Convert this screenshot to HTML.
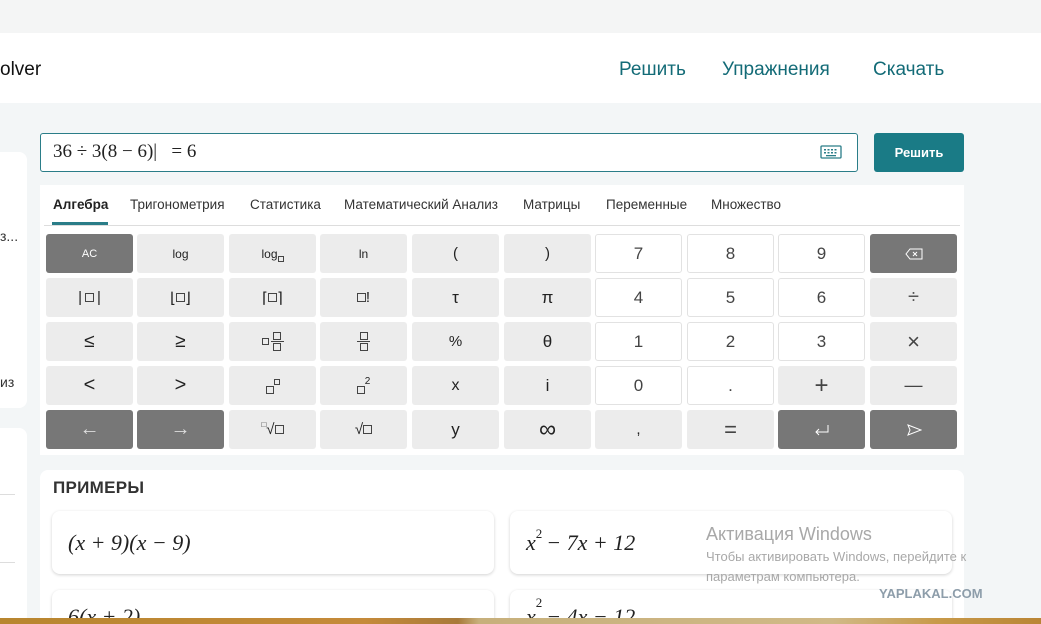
<!DOCTYPE html>
<html style="width:1041px;height:624px;overflow:hidden"><head><meta charset="utf-8"><style>
*{margin:0;padding:0;box-sizing:border-box}
body{width:1041px;height:624px;overflow:hidden;background:#f3f6f7;font-family:"Liberation Sans","DejaVu Sans",sans-serif;position:relative;color:#222}
.a{position:absolute}
.top{left:0;top:0;width:1041px;height:33px;background:#f4f5f5}
.hdr{left:0;top:33px;width:1041px;height:70px;background:#fff}
.nav{top:59px;font-size:19px;color:#136b77}
.card{background:#fff;border-radius:8px}
.k{position:absolute;width:87px;height:39px;border-radius:3px;background:#ececec;display:flex;align-items:center;justify-content:center;font-size:15px;color:#222}
.d{background:#777;color:#fff}
.w{background:#fff;border:1px solid #e2e2e2;font-size:17px;color:#444}
.tab{top:197px;font-size:13.5px;color:#333}
.ex{background:#fff;border-radius:8px;box-shadow:0 1px 3px rgba(0,0,0,.18);font-family:"Liberation Serif",serif;font-style:italic;font-size:22px;padding-left:16px;display:flex;align-items:center;overflow:hidden}
.sq{display:inline-block;width:9px;height:9px;border:1px solid #444}
.sup{font-size:13px;font-style:normal;position:relative;top:-9px;margin-right:4px}
</style></head><body>
<div class="a top"></div>
<div class="a hdr"></div>
<div class="a" style="left:0;top:59px;font-size:19px;color:#111">olver</div>
<div class="a nav" style="left:619px">Решить</div>
<div class="a nav" style="left:722px">Упражнения</div>
<div class="a nav" style="left:873px">Скачать</div>

<div class="a card" style="left:-10px;top:152px;width:37px;height:256px"></div>
<div class="a" style="left:0;top:228px;font-size:14px;color:#333">з...</div>
<div class="a" style="left:0;top:374px;font-size:14px;color:#333">из</div>
<div class="a card" style="left:-10px;top:428px;width:37px;height:196px"></div>
<div class="a" style="left:0;top:494px;width:15px;height:1px;background:#ddd"></div>
<div class="a" style="left:0;top:562px;width:15px;height:1px;background:#ddd"></div>

<div class="a" style="left:40px;top:133px;width:818px;height:39px;background:#fff;border:1px solid #2a7d88;border-radius:3px"></div>
<div class="a" style="left:53px;top:141px;font-family:'Liberation Serif',serif;font-size:19px;color:#222">36 ÷ 3(8 − 6)| &nbsp;&nbsp;= 6</div>
<svg class="a" style="left:820px;top:145px" width="22" height="14" viewBox="0 0 22 14"><rect x="1" y="1" width="20" height="12" rx="1" fill="none" stroke="#2a7d88" stroke-width="1.3"/><g fill="#2a7d88"><rect x="4" y="4" width="2" height="1.5"/><rect x="7.5" y="4" width="2" height="1.5"/><rect x="11" y="4" width="2" height="1.5"/><rect x="14.5" y="4" width="2" height="1.5"/><rect x="4" y="7" width="2" height="1.5"/><rect x="7.5" y="7" width="2" height="1.5"/><rect x="11" y="7" width="2" height="1.5"/><rect x="14.5" y="7" width="2" height="1.5"/><rect x="6" y="10" width="10" height="1.3"/></g></svg>
<div class="a" style="left:874px;top:133px;width:90px;height:39px;background:#1a7b86;border-radius:3px;color:#fff;font-size:13px;font-weight:bold;display:flex;align-items:center;justify-content:center">Решить</div>

<div class="a" style="left:40px;top:185px;width:924px;height:270px;background:#fff"></div>
<div class="a tab" style="left:53px;font-weight:bold;color:#222">Алгебра</div>
<div class="a tab" style="left:130px">Тригонометрия</div>
<div class="a tab" style="left:250px">Статистика</div>
<div class="a tab" style="left:344px">Математический Анализ</div>
<div class="a tab" style="left:523px">Матрицы</div>
<div class="a tab" style="left:606px">Переменные</div>
<div class="a tab" style="left:711px">Множество</div>
<div class="a" style="left:44px;top:225px;width:916px;height:1px;background:#ddd"></div>
<div class="a" style="left:52px;top:222px;width:56px;height:3px;background:#2a7d88"></div>

<div class="k d" style="left:46px;top:234px;font-size:11px">AC</div>
<div class="k" style="left:137px;top:234px;font-size:12px">log</div>
<div class="k" style="left:229px;top:234px;font-size:12px">log<span class="sq" style="width:6px;height:6px;margin-top:10px"></span></div>
<div class="k" style="left:320px;top:234px;font-size:12px">ln</div>
<div class="k" style="left:412px;top:234px">(</div>
<div class="k" style="left:504px;top:234px">)</div>
<div class="k w" style="left:595px;top:234px">7</div>
<div class="k w" style="left:687px;top:234px">8</div>
<div class="k w" style="left:778px;top:234px">9</div>
<div class="k d" style="left:870px;top:234px"><svg width="18" height="12" viewBox="0 0 18 12"><path d="M5 1H17V11H5L1 6Z" fill="none" stroke="#fff"/><path d="M8 4L12 8M12 4L8 8" stroke="#fff"/></svg></div>

<div class="k" style="left:46px;top:278px">|<span class="sq" style="margin:0 3px"></span>|</div>
<div class="k" style="left:137px;top:278px">⌊<span class="sq"></span>⌋</div>
<div class="k" style="left:229px;top:278px">⌈<span class="sq"></span>⌉</div>
<div class="k" style="left:320px;top:278px"><span class="sq"></span>!</div>
<div class="k" style="left:412px;top:278px;font-size:17px">τ</div>
<div class="k" style="left:504px;top:278px;font-size:17px">π</div>
<div class="k w" style="left:595px;top:278px">4</div>
<div class="k w" style="left:687px;top:278px">5</div>
<div class="k w" style="left:778px;top:278px">6</div>
<div class="k" style="left:870px;top:278px;font-size:20px;color:#555">÷</div>

<div class="k" style="left:46px;top:322px;font-size:19px">≤</div>
<div class="k" style="left:137px;top:322px;font-size:19px">≥</div>
<div class="k" style="left:229px;top:322px"><span class="sq" style="width:7px;height:7px"></span><span style="display:inline-flex;flex-direction:column;align-items:center;margin-left:2px"><span class="sq" style="width:8px;height:8px"></span><span style="width:13px;height:1px;background:#444;margin:1px 0"></span><span class="sq" style="width:8px;height:8px"></span></span></div>
<div class="k" style="left:320px;top:322px"><span style="display:inline-flex;flex-direction:column;align-items:center"><span class="sq" style="width:8px;height:8px"></span><span style="width:13px;height:1px;background:#444;margin:1px 0"></span><span class="sq" style="width:8px;height:8px"></span></span></div>
<div class="k" style="left:412px;top:322px">%</div>
<div class="k" style="left:504px;top:322px;font-size:17px">θ</div>
<div class="k w" style="left:595px;top:322px">1</div>
<div class="k w" style="left:687px;top:322px">2</div>
<div class="k w" style="left:778px;top:322px">3</div>
<div class="k" style="left:870px;top:322px;font-size:22px;color:#444">×</div>

<div class="k" style="left:46px;top:366px;font-size:20px">&lt;</div>
<div class="k" style="left:137px;top:366px;font-size:20px">&gt;</div>
<div class="k" style="left:229px;top:366px"><span class="sq" style="width:8px;height:8px;margin-top:8px"></span><span class="sq" style="width:6px;height:6px;margin-top:-8px"></span></div>
<div class="k" style="left:320px;top:366px"><span class="sq" style="width:8px;height:8px;margin-top:8px"></span><span style="font-size:10px;margin-top:-8px">2</span></div>
<div class="k" style="left:412px;top:366px;font-size:16px">x</div>
<div class="k" style="left:504px;top:366px;font-size:17px">i</div>
<div class="k w" style="left:595px;top:366px">0</div>
<div class="k w" style="left:687px;top:366px">.</div>
<div class="k" style="left:778px;top:366px;font-size:24px;color:#444">+</div>
<div class="k" style="left:870px;top:366px;font-size:18px;color:#444">—</div>

<div class="k d" style="left:46px;top:410px;font-size:20px;color:#ddd">←</div>
<div class="k d" style="left:137px;top:410px;font-size:20px;color:#ddd">→</div>
<div class="k" style="left:229px;top:410px"><span style="font-size:8px;margin-top:-10px">□</span>√<span class="sq"></span></div>
<div class="k" style="left:320px;top:410px">√<span class="sq"></span></div>
<div class="k" style="left:412px;top:410px;font-size:17px">y</div>
<div class="k" style="left:504px;top:410px;font-size:24px">∞</div>
<div class="k" style="left:595px;top:410px">,</div>
<div class="k" style="left:687px;top:410px;font-size:22px;color:#444">=</div>
<div class="k d" style="left:778px;top:410px"><svg width="18" height="14" viewBox="0 0 18 14"><path d="M15 2V9H3M6 6L3 9L6 12" fill="none" stroke="#fff"/></svg></div>
<div class="k d" style="left:870px;top:410px"><svg width="16" height="12" viewBox="0 0 16 12"><path d="M2 1L15 6L2 11L4 6Z" fill="none" stroke="#fff"/></svg></div>

<div class="a card" style="left:40px;top:470px;width:924px;height:154px;border-radius:8px 8px 0 0"></div>
<div class="a" style="left:53px;top:478px;font-size:17px;font-weight:bold;color:#333;letter-spacing:.3px">ПРИМЕРЫ</div>
<div class="a ex" style="left:52px;top:511px;width:442px;height:63px">(x + 9)(x − 9)</div>
<div class="a ex" style="left:510px;top:511px;width:442px;height:63px">x<span class="sup">2</span>− 7x + 12</div>
<div class="a ex" style="left:52px;top:590px;width:442px;height:34px;align-items:flex-start;padding-top:14px;border-radius:8px 8px 0 0">6(x + 2)</div>
<div class="a ex" style="left:510px;top:590px;width:442px;height:34px;align-items:flex-start;padding-top:14px;border-radius:8px 8px 0 0">x<span class="sup">2</span>− 4x − 12</div>

<div class="a" style="left:706px;top:524px;font-size:18px;color:#a8a8a8">Активация Windows</div>
<div class="a" style="left:706px;top:549px;font-size:13px;color:#a8a8a8">Чтобы активировать Windows, перейдите к</div>
<div class="a" style="left:706px;top:569px;font-size:13px;color:#a8a8a8">параметрам компьютера.</div>
<div class="a" style="left:879px;top:586px;font-size:13px;font-weight:bold;color:#8d9daa">YAPLAKAL.COM</div>

<div class="a" style="left:0;top:618px;width:1041px;height:6px;background:linear-gradient(90deg,#b8862f 0%,#c58a3a 35%,#a87a3a 44%,#c7b07c 46%,#d0b987 80%,#c89a4a 90%,#b98535 100%)"></div>
</body></html>
